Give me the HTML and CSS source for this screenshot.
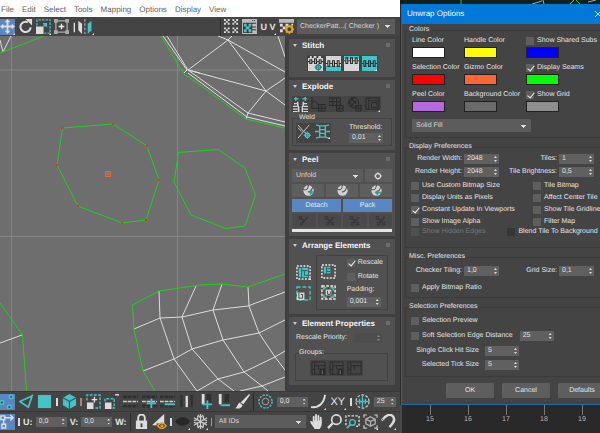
FILE: index.html
```
<!DOCTYPE html>
<html lang="en">
<head>
<meta charset="utf-8">
<title>Edit UVWs</title>
<link rel="stylesheet" href="styles.css">
</head>
<body>
<svg class="defs" aria-hidden="true">
  <symbol id="move" viewBox="0 0 16 16"><path fill="#ddd" d="M8 0l3 3.500H9V7h3.500V5L16 8l-3.500 3V9H9v3.500h2L8 16l-3-3.500h2V9H3.500v2L0 8l3.500-3v2H7V3.500H5z"/></symbol>
  <symbol id="rotate" viewBox="0 0 16 16"><path fill="none" stroke="#ddd" stroke-width="2.200" d="M10.500 3.500A5.500 5.500 0 1 0 13.500 9"/><path fill="#ddd" d="M8 0h7v7z"/></symbol>
  <symbol id="scale" viewBox="0 0 16 16"><path fill="none" stroke="#45c4c4" stroke-width="1.400" stroke-dasharray="2.500 1.300" d="M1 7V1h14v14H9"/><path fill="#ddd" d="M0 8h8v8H0z"/><path fill="none" stroke="#45c4c4" stroke-width="1.500" d="M7.500 5H11v3.500M11 5L8 8"/></symbol>
  <symbol id="freeform" viewBox="0 0 16 16"><path fill="none" stroke="#aaa" stroke-width="1.400" d="M2 2h12v12H2z"/><path fill="#aaa" d="M0 0h4v4H0zM12 0h4v4h-4zM0 12h4v4H0zM12 12h4v4h-4z"/><path stroke="#eee" stroke-width="1.400" d="M8 5v6M5 8h6"/></symbol>
  <symbol id="mirror" viewBox="0 0 22 16"><path fill="#ddd" d="M1 4h1.500v10H1zM6 2l4 3v11l-4-4z"/><path fill="#45c4c4" d="M20 2l-4 3v11l4-4z"/><path stroke="#aaa" stroke-width="1.200" stroke-dasharray="3 1.500" d="M13 0v16"/></symbol>
  <symbol id="checker" viewBox="0 0 16 16"><path fill="none" stroke="#ddd" stroke-width="2" stroke-dasharray="2 2" d="M0 1h7M2 3h4M0 5h7M9 1h7M11 3h4M9 5h7M0 10h7M2 12h4M0 14h7M9 10h7M11 12h4M9 14h7"/></symbol>
  <symbol id="options" viewBox="0 0 16 16"><path fill="#bbb" d="M0 0h16v16H0z"/><path fill="#383838" d="M1 4h14v11H1zM11 1h1v1h-1zM13 1h1v1h-1z"/><path fill="#45c4c4" d="M2 5h3v3H2zM7 5h3v3H7zM4 8h4v3H4zM2 11h3v3H2zM7 11h3v3H7z"/><path fill="#bbb" d="M11 5h4v3h-4zM11 9h4v2h-4zM11 12h4v3h-4z"/></symbol>
  <symbol id="checkgear" viewBox="0 0 16 16"><path fill="#bbb" d="M0 0h16v4H0z"/><path fill="#ddd" d="M1 5h3v3H1zM7 5h3v3H7zM4 8h3v3H4zM1 11h3v3H1zM13 5h2v2h-2z"/><circle cx="11" cy="11" r="3.200" fill="none" stroke="#eaa21b" stroke-width="2.200"/><path stroke="#eaa21b" stroke-width="1.300" d="M11 6v2M11 14v2M6 11h2M14 11h2M7.500 7.500l1.500 1.500M13 13l1.500 1.500M14.500 7.500L13 9M9 13l-1.500 1.500"/></symbol>

  <symbol id="chain-a" viewBox="0 0 16 16"><path fill="#d5d5d5" d="M0 0h16v16H0z"/><path fill="#353535" d="M0 0h2v2H0zM4 0h2v2H4zM9 0h2v2H9zM14 0h2v2h-2z"/><path fill="none" stroke="#333" stroke-width="1.200" d="M2 4h2v4H2zM7 3h2v5H7zM12 4h2v4h-2zM0 6h2M4 6h3M9 6h3M14 6h2"/><circle cx="11" cy="12" r="2.500" fill="none" stroke="#1c8082" stroke-width="1.500"/><path stroke="#1c8082" d="M11 8v8M7 12h8"/></symbol>
  <symbol id="chain-b" viewBox="0 0 16 16"><path fill="#d5d5d5" d="M0 0h16v11H0z"/><path fill="#45c4c4" d="M0 11h16v5H0z"/><path fill="none" stroke="#333" stroke-width="1.200" d="M2 5h2v6H2zM7 5h2v6H7zM12 5h2v6h-2zM0 8h2M4 8h3M9 8h3M14 8h2"/></symbol>
  <symbol id="chain-c" viewBox="0 0 16 16"><path fill="#d5d5d5" d="M0 0h16v16H0z"/><path fill="#45c4c4" d="M0 0h16v3H0z"/><path fill="none" stroke="#333" stroke-width="1.200" d="M2 2h2v6H2zM7 2h2v6H7zM12 2h2v6h-2zM0 5h2M4 5h3M9 5h3M14 5h2"/></symbol>
  <symbol id="chain-d" viewBox="0 0 16 16"><path fill="#45c4c4" d="M0 0h16v16H0z"/><path fill="none" stroke="#234" stroke-width="1.200" d="M2 5h2v6H2zM7 5h2v6H7zM12 5h2v6h-2zM0 8h2M4 8h3M9 8h3M14 8h2"/></symbol>
  <symbol id="break" viewBox="0 0 16 16"><path fill="none" stroke="#45c4c4" stroke-width="1.500" d="M1 2h5M3 0v4M10 2h5M13 0v4"/><path fill="none" stroke="#d5d5d5" stroke-width="1.600" d="M5 5v3l1 3v5M11 5v3l-1 3v5"/><path fill="none" stroke="#d5d5d5" stroke-width="1.400" d="M1 7h4M0 10h5M0 13h5M0 15.500h5M11 7h4M11 10h5M11 13h5M11 15.500h5"/></symbol>
  <symbol id="ex-b" viewBox="0 0 16 16"><path fill="none" stroke="#292929" d="M1 0v12h6M1 6c4-3 6 0 6 3M8 8h7v7H8zM11 8v7M8 12h7"/></symbol>
  <symbol id="ex-c" viewBox="0 0 16 16"><path fill="none" stroke="#292929" d="M0 1h12v8H0zM0 5h12M4 1v8M8 1v8M8 9h7v6H8zM11 9v6M8 12h7"/></symbol>
  <symbol id="ex-d" viewBox="0 0 16 16"><circle cx="7" cy="6" r="5.500" fill="none" stroke="#292929"/><path fill="#292929" d="M4 1h3v3H4zM7 4h3v3H7zM2 4h2v3H2zM4 7h3v3H4z"/><path fill="none" stroke="#292929" d="M9 9h6v6H9zM12 9v6M9 12h6"/></symbol>
  <symbol id="ex-e" viewBox="0 0 16 16"><path fill="none" stroke="#292929" d="M1 1h14v12H1zM4 1v12M4 4h11M7 6h6v5H7z"/></symbol>
  <symbol id="weld-a" viewBox="0 0 16 16"><path fill="none" stroke="#ccc" d="M1 1l6 7 6-7M1 15l6-7M7 8l3 2M1 4l4 4"/><circle cx="11" cy="12" r="2.300" fill="none" stroke="#45c4c4" stroke-width="1.400"/><path stroke="#45c4c4" d="M11 8v8M7 12h8"/></symbol>
  <symbol id="weld-b" viewBox="0 0 16 16"><path fill="none" stroke="#45c4c4" stroke-width="1.500" d="M1 1l4 1h6l4-1M1 15l4-1h6l4 1M5 2v12M11 2v12M5 6h6M5 10h6M0 8h4M12 8h4"/></symbol>

  <symbol id="ring" viewBox="0 0 16 16"><circle cx="8" cy="8" r="5" fill="none" stroke="#ddd" stroke-width="2.500"/><path stroke="#ddd" stroke-width="1.500" d="M8 0v3M8 13v3M0 8h3M13 8h3"/></symbol>
  <symbol id="peel" viewBox="0 0 16 16"><circle cx="8" cy="8" r="7.500" fill="#d2d2d2"/><path fill="none" stroke="#505050" stroke-width="1.500" d="M0 6c5 2 7 1 8-6M7 10c4 0 6-3 7-7"/></symbol>
  <symbol id="peel-quick" viewBox="0 0 16 16"><use href="#peel"/><path fill="#2f9c9c" d="M11 6l4 4-4 5-2-4z"/></symbol>
  <symbol id="peel-reset" viewBox="0 0 16 16"><use href="#peel"/><path fill="none" stroke="#2f9c9c" stroke-width="2.500" d="M7 11h8M10 8l-3 3 3 3"/></symbol>
  <symbol id="snip" viewBox="0 0 16 16"><circle cx="3.500" cy="4" r="2" fill="none" stroke="#373737" stroke-width="1.500"/><circle cx="5" cy="13" r="2" fill="none" stroke="#373737" stroke-width="1.500"/><path stroke="#373737" stroke-width="2.200" d="M5 5l4 4 5-6M9 8l-3 4" fill="none"/></symbol>
  <symbol id="snip-x" viewBox="0 0 16 16"><use href="#snip"/><path stroke="#373737" stroke-width="2" d="M10 10l5 5M15 10l-5 5"/></symbol>

  <symbol id="pack-a" viewBox="0 0 16 16"><path fill="none" stroke="#eee" stroke-width="1.500" stroke-dasharray="2 1.500" d="M1 1h14v14H1z"/><path fill="#45c4c4" d="M3 3h10v10H3z"/><path fill="none" stroke="#256264" d="M6 3v10M6 6h7M9 6v5h4"/></symbol>
  <symbol id="pack-b" viewBox="0 0 16 16"><path fill="none" stroke="#eee" stroke-width="1.500" stroke-dasharray="2 1.500" d="M1 1h14v14H1z"/><path fill="#45c4c4" d="M3 3h7v7H3z"/><path fill="none" stroke="#256264" d="M6 3v7M6 5h4M6 8h4"/></symbol>
  <symbol id="pack-c" viewBox="0 0 16 16"><path fill="none" stroke="#45c4c4" stroke-width="1.500" stroke-dasharray="4 2" d="M1 1h14v14H1z"/><path fill="#d8d8d8" d="M1 7h8v8H1z"/><path fill="none" stroke="#444" d="M3 7v6h4V9H5"/></symbol>
  <symbol id="pack-d" viewBox="0 0 16 16"><path fill="none" stroke="#eee" stroke-width="1.500" stroke-dasharray="3 1.500" d="M1 1h14v14H1z"/><path fill="none" stroke="#45c4c4" stroke-width="1.500" d="M3 5V3h3M10 3h3v3M3 10v3h3M13 10v3h-3"/><path fill="#d8d8d8" d="M5 5h6v6H5z"/><path fill="none" stroke="#444" d="M7 6v4h3V7"/></symbol>
  <symbol id="group" viewBox="0 0 16 16"><path fill="none" stroke="#2b2b2b" d="M1 1h14v13H1zM4 1v13M4 5h11M1 9h3M8 5v4"/></symbol>
  <symbol id="group-add" viewBox="0 0 16 16"><use href="#group"/><path fill="#2b2b2b" d="M9 8h6v7H9z"/><path stroke="#777" d="M12 10v4"/></symbol>

  <symbol id="verts" viewBox="0 0 16 16"><g fill="#245e78" stroke="#45c4c4" stroke-width="1.500"><circle cx="12" cy="3" r="2"/><circle cx="2" cy="9" r="2"/><circle cx="10" cy="14" r="2"/></g></symbol>
  <symbol id="edge" viewBox="0 0 16 16"><path fill="none" stroke="#45c4c4" stroke-width="1.800" d="M1 8l13-6-4 12z"/></symbol>
  <symbol id="face" viewBox="0 0 16 16"><path fill="#45c4c4" d="M1 1h14v14H1z"/></symbol>
  <symbol id="cube" viewBox="0 0 16 16"><path fill="#45c4c4" d="M8 0l7 4v8l-7 4-7-4V4z"/><path fill="none" stroke="#295f62" stroke-width="1.300" d="M1 4l7 4 7-4M8 8v8"/></symbol>
  <symbol id="grow" viewBox="0 0 16 16"><path fill="none" stroke="#45c4c4" stroke-width="1.500" stroke-dasharray="3 1.500" d="M1 7V1h14v14H9"/><path fill="#ddd" d="M1 9h7v7H1z"/><path stroke="#ddd" stroke-width="1.500" d="M9 3v6M6 6h6"/></symbol>
  <symbol id="shrink" viewBox="0 0 16 16"><path fill="none" stroke="#45c4c4" stroke-width="1.500" stroke-dasharray="3 1.500" d="M1 8V5h10v10H9"/><path fill="#ddd" d="M1 9h7v7H1zM12 0h4v1.500h-4z"/></symbol>
  <symbol id="loop" viewBox="0 0 16 16"><path stroke="#303030" stroke-width="3" stroke-dasharray="4 1" d="M0 3h16M0 13h16"/><path stroke="#ccc" stroke-width="1.700" stroke-dasharray="4 1" d="M0 8h16"/></symbol>
  <symbol id="loop-add" viewBox="0 0 16 16"><use href="#loop"/><path stroke="#45c4c4" stroke-width="2" d="M10 5v10M5 10h10"/></symbol>
  <symbol id="loop-sub" viewBox="0 0 16 16"><use href="#loop"/><path stroke="#45c4c4" stroke-width="2" d="M5 11h11"/></symbol>
  <symbol id="ring-sel" viewBox="0 0 16 16"><path fill="#333" d="M1 1h3v13H1zM12 1h3v13h-3z"/><path fill="#ddd" d="M7 2h2.500v12H7z"/></symbol>
  <symbol id="ring-add" viewBox="0 0 16 16"><path fill="#303030" d="M9 0h5v9H9z"/><path fill="#ddd" d="M4 0h3v11H4z"/><path stroke="#45c4c4" stroke-width="2" d="M10 7v9M5 11h10"/></symbol>
  <symbol id="ring-sub" viewBox="0 0 16 16"><path fill="#303030" d="M9 0h5v9H9z"/><path fill="#ddd" d="M3 0h3v11H3z"/><path stroke="#45c4c4" stroke-width="2" d="M5 12h10"/></symbol>
  <symbol id="brush" viewBox="0 0 16 16"><path fill="#ddd" d="M15 0l1 1-7 10-3-2zM5 9l3 3c-1 4-5 4-8 3 3-1 2-4 5-6z"/></symbol>
  <symbol id="falloff" viewBox="0 0 16 16"><circle cx="8" cy="8" r="7" fill="none" stroke="#45c4c4" stroke-width="1.500" stroke-dasharray="2.400 1.300"/><circle cx="8" cy="8" r="3.500" fill="none" stroke="#aaa"/></symbol>
  <symbol id="curve" viewBox="0 0 16 16"><path fill="none" stroke="#ddd" stroke-width="2" d="M0 14C9 15 14 9 15 1"/></symbol>
  <symbol id="pixel" viewBox="0 0 16 16"><circle cx="8" cy="8" r="7" fill="none" stroke="#ccc" stroke-width="1.300" stroke-dasharray="3 1.500"/><path fill="none" stroke="#45c4c4" stroke-width="1.400" d="M1 8h14M8 2v12M5 5v6M11 5v6"/></symbol>
  <symbol id="gizmo" viewBox="0 0 16 16"><path fill="none" stroke="#ddd" stroke-width="1.500" d="M1 2h4v4H1zM2 11h4v4H2zM5 4h9M4 6v5M11 1l3 3-3 3"/></symbol>
  <symbol id="lock" viewBox="0 0 16 16"><path fill="#ddd" d="M2 7h12v9H2z"/><path fill="none" stroke="#ddd" stroke-width="2" d="M4.500 8V4a3.500 3.500 0 0 1 7 0v4"/><path fill="#444" d="M7 10h2v4H7z"/></symbol>
  <symbol id="filter" viewBox="0 0 16 16"><path fill="#ddd" d="M0 12L13 0v12z"/><path fill="#444" d="M5 10h11v6H5z"/><path fill="none" stroke="#eaa21b" stroke-width="1.500" d="M6 12.500c3-4 6-4 9 0-3 4-6 4-9 0z"/><circle cx="10.500" cy="12.500" r="1.600" fill="#eaa21b"/></symbol>
  <symbol id="eye" viewBox="0 0 16 16"><path fill="#282828" d="M0 8c4-6 12-6 16 0-4 6-12 6-16 0z"/></symbol>
  <symbol id="snow" viewBox="0 0 16 16"><path fill="none" stroke="#ccc" stroke-width="1.300" d="M8 0v16M1 4l14 8M15 4L1 12M5 1l3 3 3-3M5 15l3-3 3 3M1 7l4-1V2M15 9l-4 1v4M15 7l-4-1V2M1 9l4 1v4"/></symbol>
  <symbol id="hand" viewBox="0 0 16 16"><path fill="none" stroke="#ddd" stroke-width="2" stroke-linecap="round" d="M5 8V3M7.500 8V1M10 8V2M12.500 9V4"/><path fill="#ddd" d="M4 7h9.500v5l-2 4H6L2 10l-1-2 2-.5 2 2z"/></symbol>
  <symbol id="zoom" viewBox="0 0 16 16"><circle cx="10" cy="6" r="5" fill="none" stroke="#ddd" stroke-width="1.800"/><path stroke="#ddd" stroke-width="2.500" d="M6 10l-5 5"/></symbol>
  <symbol id="zoomreg" viewBox="0 0 16 16"><path fill="none" stroke="#ddd" stroke-width="1.500" stroke-dasharray="2.500 1.500" d="M1 12V2h14v11h-3"/><circle cx="8" cy="9" r="3" fill="none" stroke="#45c4c4" stroke-width="1.500"/><path stroke="#45c4c4" stroke-width="1.800" d="M6 11l-4 4"/></symbol>
  <symbol id="extents" viewBox="0 0 16 16"><path fill="none" stroke="#ccc" stroke-width="1.200" d="M1 4V1h3M12 1h3v3M1 12v3h3M12 15h3v-3"/><path fill="none" stroke="#aaa" stroke-width="1.500" d="M8 3l5 2.500v5L8 13l-5-2.500v-5zM3 5.500L8 8l5-2.500M8 8v5"/></symbol>
  <symbol id="snap" viewBox="0 0 16 16"><path fill="none" stroke="#ddd" stroke-width="2.500" d="M1 7c4-6 9-8 12-4s-1 8-4 11"/><path stroke="#444" d="M1 5l3 3"/></symbol>
</svg>

<main class="workspace">
  <section class="editor">
    <nav class="menubar">
      <a href="#">File</a><a href="#">Edit</a><a href="#">Select</a><a href="#">Tools</a><a href="#">Mapping</a><a href="#">Options</a><a href="#">Display</a><a href="#">View</a>
    </nav>

    <div class="toolbar top">
      <button class="tool on fly" aria-label="Move"><svg><use href="#move"/></svg></button>
      <button class="tool" aria-label="Rotate"><svg><use href="#rotate"/></svg></button>
      <button class="tool fly" aria-label="Scale"><svg><use href="#scale"/></svg></button>
      <button class="tool" aria-label="Freeform"><svg><use href="#freeform"/></svg></button>
      <button class="tool wide fly" aria-label="Mirror"><svg><use href="#mirror"/></svg></button>
      <span class="push divider"></span>
      <button class="tool" aria-label="Checker"><svg><use href="#checker"/></svg></button>
      <button class="tool" aria-label="Show map"><svg><use href="#options"/></svg></button>
      <button class="tool text fly" aria-label="UV">U V</button>
      <button class="tool" aria-label="Map options"><svg><use href="#checkgear"/></svg></button>
      <select class="map" aria-label="Map"><option>CheckerPatt...( Checker )</option></select>
    </div>

    <div class="middle">
      <svg class="canvas" viewBox="0 36 285 355" preserveAspectRatio="xMinYMin slice" role="img" aria-label="UV canvas">
        <path class="grid" d="M11.500 36V391M177.500 36V391M0 70H285M0 236.500H285"/>
        <path class="wire" d="M0 40L3 52 11 36M163 36L187 70M167 36L188 70L228 40L218 36M228 40L232 36M228 40L266 91L285 105M228 40L285 72M188 70L266 91L285 78M266 91L248 113M188 70L248 113L285 122M187 70L184 73M188 73L200 82L247 117L285 126M248 113L246 119M278 36L285 57M188 70L200 73"/>
        <path class="wire" d="M159 291L160 318L174 359L197 391M134 329L160 318L182 317L213 310L248 306L285 292M196 286L182 317L192 349L200 358L218 379L234 391M143 371L174 359L192 349L223 340L259 333L285 320M222 284L213 310L223 340L244 372L262 386L268 391M248 287L249 306L259 333L275 357L285 370M197 391L218 379L244 372L275 357L285 351M240 391L262 386L285 377M0 343L22 335"/>
        <path class="seam" d="M0 53L44 36M161 36L184 74L200 85L246 119L285 128M155 391L143 371L134 329L132.500 305L159 291L200 285L222 284L248 287L285 274M0 303L22.500 335L26.500 391"/>
        <path class="seam" d="M62.500 128L113 124L147 146L159 180L146 220L122 223L78 206L57 165zM178.500 152.500L218 149.500L245 168L255.500 195L245 226L226 228.500L191 215L174 182z"/>
        <path class="picked" d="M61.500 127h2v2h-2zM112 123h2v2h-2zM146 145h2v2h-2zM158 179h2v2h-2zM145 219h2v2h-2zM121 222h2v2h-2zM77 205h2v2h-2zM56 164h2v2h-2z"/>
        <path class="pivot" d="M105.500 171.500h5v5h-5zM105.500 174h5M108 171.500v5"/>
      </svg>

      <aside class="panel">
        <section class="rollup">
          <h2>Stitch</h2>
          <div class="strip center">
            <button class="tool" aria-label="Stitch custom"><svg><use href="#chain-a"/></svg></button>
            <button class="tool" aria-label="Stitch to target"><svg><use href="#chain-b"/></svg></button>
            <button class="tool" aria-label="Stitch to source"><svg><use href="#chain-c"/></svg></button>
            <button class="tool fly" aria-label="Stitch average"><svg><use href="#chain-d"/></svg></button>
          </div>
        </section>

        <section class="rollup">
          <h2>Explode</h2>
          <div class="strip">
            <button class="tool" aria-label="Break"><svg><use href="#break"/></svg></button>
            <button class="tool" disabled aria-label="Flatten by angle"><svg><use href="#ex-b"/></svg></button>
            <button class="tool" disabled aria-label="Flatten by smoothing"><svg><use href="#ex-c"/></svg></button>
            <button class="tool" disabled aria-label="Flatten by material"><svg><use href="#ex-d"/></svg></button>
            <button class="tool fly" disabled aria-label="Flatten custom"><svg><use href="#ex-e"/></svg></button>
          </div>
          <fieldset class="box weld">
            <legend>Weld</legend>
            <div class="strip">
              <button class="tool" aria-label="Target weld"><svg><use href="#weld-a"/></svg></button>
              <button class="tool fly" aria-label="Weld selected"><svg><use href="#weld-b"/></svg></button>
            </div>
            <div class="stack">
              <label for="thr">Threshold:</label>
              <span class="spin"><input id="thr" value="0,01"></span>
            </div>
          </fieldset>
        </section>

        <section class="rollup">
          <h2>Peel</h2>
          <div class="peel">
            <div class="row"><select class="mode" aria-label="Peel mode"><option>Unfold</option></select><button class="key narrow" aria-label="Peel options"><svg><use href="#ring"/></svg></button></div>
            <div class="row">
              <button class="key" aria-label="Quick peel"><svg><use href="#peel-quick"/></svg></button>
              <button class="key" aria-label="Peel mode"><svg><use href="#peel"/></svg></button>
              <button class="key" aria-label="Reset peel"><svg><use href="#peel-reset"/></svg></button>
            </div>
            <div class="row">
              <button class="key on">Detach</button>
              <button class="key on">Pack</button>
            </div>
            <div class="row">
              <button class="key" disabled aria-label="Edit seams"><svg><use href="#snip"/></svg></button>
              <button class="key" disabled aria-label="Point to point"><svg><use href="#snip-x"/></svg></button>
              <button class="key" disabled aria-label="Convert edge"><svg><use href="#snip-x"/></svg></button>
              <button class="key" disabled aria-label="Expand seams"><svg><use href="#snip-x"/></svg></button>
            </div>
            <div class="meter"></div>
          </div>
        </section>

        <section class="rollup">
          <h2>Arrange Elements</h2>
          <div class="arrange">
            <div class="icons">
              <button class="tool fly" aria-label="Pack custom"><svg><use href="#pack-a"/></svg></button>
              <button class="tool" aria-label="Rescale elements"><svg><use href="#pack-c"/></svg></button>
            </div>
            <div class="box inner">
              <div class="icons">
                <button class="tool" aria-label="Pack together"><svg><use href="#pack-b"/></svg></button>
                <button class="tool" aria-label="Pack normalize"><svg><use href="#pack-d"/></svg></button>
              </div>
              <div class="stack">
                <label class="check"><input type="checkbox" checked>Rescale</label>
                <label class="check"><input type="checkbox">Rotate</label>
                <label for="pad">Padding:</label>
                <span class="spin"><input id="pad" value="0,001"></span>
              </div>
            </div>
          </div>
        </section>

        <section class="rollup">
          <h2>Element Properties</h2>
          <div class="priority"><label for="prio">Rescale Priority:</label><span class="spin off"><input id="prio" disabled></span></div>
          <fieldset class="box groups">
            <legend>Groups:</legend>
            <div class="strip">
              <button class="tool" disabled aria-label="Group"><svg><use href="#group-add"/></svg></button>
              <button class="tool" disabled aria-label="Ungroup"><svg><use href="#group-add"/></svg></button>
              <button class="tool" disabled aria-label="Select group"><svg><use href="#group"/></svg></button>
            </div>
          </fieldset>
        </section>
      </aside>
    </div>

    <div class="toolbar low">
      <button class="tool on" aria-label="Vertex"><svg><use href="#verts"/></svg></button>
      <button class="tool" aria-label="Edge"><svg><use href="#edge"/></svg></button>
      <button class="tool" aria-label="Polygon"><svg><use href="#face"/></svg></button>
      <span class="bar"></span>
      <button class="tool" aria-label="Element"><svg><use href="#cube"/></svg></button>
      <span class="bar warm"></span>
      <button class="tool" aria-label="Grow"><svg><use href="#grow"/></svg></button>
      <button class="tool" aria-label="Shrink"><svg><use href="#shrink"/></svg></button>
      <button class="tool" aria-label="Loop"><svg><use href="#loop"/></svg></button>
      <button class="tool" aria-label="Loop grow"><svg><use href="#loop-add"/></svg></button>
      <button class="tool" aria-label="Loop shrink"><svg><use href="#loop-sub"/></svg></button>
      <button class="tool" aria-label="Ring"><svg><use href="#ring-sel"/></svg></button>
      <button class="tool" aria-label="Ring grow"><svg><use href="#ring-add"/></svg></button>
      <button class="tool" aria-label="Ring shrink"><svg><use href="#ring-sub"/></svg></button>
      <button class="tool" aria-label="Paint select"><svg><use href="#brush"/></svg></button>
      <span class="divider"></span>
      <button class="tool" aria-label="Soft selection"><svg><use href="#falloff"/></svg></button>
      <span class="spin"><input value="0,0" aria-label="Falloff"></span>
      <button class="tool fly" aria-label="Falloff curve"><svg><use href="#curve"/></svg></button>
      <button class="tool text big fly" aria-label="XY">XY</button>
      <span class="bar"></span>
      <button class="tool" aria-label="Edge distance"><svg><use href="#pixel"/></svg></button>
      <span class="spin short"><input value="25" aria-label="Distance"></span>
    </div>

    <div class="toolbar low status">
      <button class="tool on" aria-label="Absolute"><svg><use href="#gizmo"/></svg></button>
      <span class="bar"></span>
      <label class="axis" for="u">U:</label><span class="spin"><input id="u" value="0,0"></span>
      <label class="axis" for="v">V:</label><span class="spin"><input id="v" value="0,0"></span>
      <span class="axis">W:</span>
      <span class="divider"></span>
      <button class="tool" aria-label="Lock"><svg><use href="#lock"/></svg></button>
      <button class="tool" aria-label="Filter"><svg><use href="#filter"/></svg></button>
      <span class="bar"></span>
      <button class="tool fly" aria-label="Hide"><svg><use href="#eye"/></svg></button>
      <button class="tool fly" aria-label="Freeze"><svg><use href="#snow"/></svg></button>
      <span class="bar thin"></span>
      <select class="ids" aria-label="Material IDs"><option>All IDs</option></select>
      <button class="tool" aria-label="Pan"><svg><use href="#hand"/></svg></button>
      <button class="tool" aria-label="Zoom"><svg><use href="#zoom"/></svg></button>
      <button class="tool" aria-label="Zoom region"><svg><use href="#zoomreg"/></svg></button>
      <button class="tool fly" aria-label="Zoom extents"><svg><use href="#extents"/></svg></button>
      <button class="tool fly" aria-label="Snap"><svg><use href="#snap"/></svg></button>
    </div>
  </section>

  <section class="side">
    <svg class="sliver" viewBox="0 0 200 4" preserveAspectRatio="xMinYMin slice" aria-hidden="true"><path stroke="#2ecc2e" d="M61 0v4M176 0l4 4"/><path stroke="#aaa" d="M132 4l10-3M143 0l1 4M170 4l4-4M188 2l8-2"/></svg>

    <div class="dialog" role="dialog" aria-labelledby="dlg-title">
      <header><h1 id="dlg-title">Unwrap Options</h1><button aria-label="Close"><svg viewBox="0 0 8 8"><path stroke="#fff" d="M0 0l8 8M8 0L0 8"/></svg></button></header>
      <form>
        <fieldset class="colors">
          <legend>Colors</legend>
          <div class="swatches">
            <label>Line Color<input type="button" class="swatch white" aria-label="Line Color"></label>
            <label>Handle Color<input type="button" class="swatch yellow" aria-label="Handle Color"></label>
            <div><label class="check"><input type="checkbox">Show Shared Subs</label><button type="button" class="swatch blue" aria-label="Shared color"></button></div>
            <label>Selection Color<input type="button" class="swatch red" aria-label="Selection Color"></label>
            <label>Gizmo Color<input type="button" class="swatch orange" aria-label="Gizmo Color"></label>
            <div><label class="check"><input type="checkbox" checked>Display Seams</label><button type="button" class="swatch green" aria-label="Seam color"></button></div>
            <label>Peel Color<input type="button" class="swatch purple" aria-label="Peel Color"></label>
            <label>Background Color<input type="button" class="swatch gray" aria-label="Background Color"></label>
            <div><label class="check"><input type="checkbox" checked>Show Grid</label><button type="button" class="swatch silver" aria-label="Grid color"></button></div>
          </div>
          <select class="fill" aria-label="Fill"><option>Solid Fill</option></select>
        </fieldset>

        <fieldset class="display">
          <legend>Display Preferences</legend>
          <div class="fields">
            <label for="rw">Render Width:</label><span class="spin"><input id="rw" value="2048"></span>
            <label for="ti">Tiles:</label><span class="spin"><input id="ti" value="1"></span>
            <label for="rh">Render Height:</label><span class="spin"><input id="rh" value="2048"></span>
            <label for="tb">Tile Brightness:</label><span class="spin"><input id="tb" value="0,5"></span>
          </div>
          <div class="checks">
            <label class="check"><input type="checkbox">Use Custom Bitmap Size</label>
            <label class="check"><input type="checkbox">Tile Bitmap</label>
            <label class="check"><input type="checkbox">Display Units as Pixels</label>
            <label class="check"><input type="checkbox">Affect Center Tile</label>
            <label class="check"><input type="checkbox" checked>Constant Update In Viewports</label>
            <label class="check"><input type="checkbox">Show Tile Gridlines</label>
            <label class="check"><input type="checkbox">Show Image Alpha</label>
            <label class="check"><input type="checkbox">Filter Map</label>
          </div>
          <div class="lastrow">
            <label class="check off"><input type="checkbox" disabled>Show Hidden Edges</label>
            <label class="check"><input type="checkbox" class="dark">Blend Tile To Background</label>
          </div>
        </fieldset>

        <fieldset class="misc">
          <legend>Misc. Preferences</legend>
          <div class="fields">
            <label for="ct">Checker Tiling:</label><span class="spin"><input id="ct" value="1,0"></span>
            <label for="gs">Grid Size:</label><span class="spin"><input id="gs" value="0,1"></span>
          </div>
          <label class="check"><input type="checkbox">Apply Bitmap Ratio</label>
        </fieldset>

        <fieldset class="selection">
          <legend>Selection Preferences</legend>
          <label class="check"><input type="checkbox">Selection Preview</label>
          <div class="pair"><label class="check"><input type="checkbox">Soft Selection Edge Distance</label><span class="spin"><input value="25" aria-label="Soft Selection Edge Distance"></span></div>
          <div class="sizes">
            <label for="hs">Single Click Hit Size</label><span class="spin"><input id="hs" value="5"></span>
            <label for="ts">Selected Tick Size</label><span class="spin"><input id="ts" value="5"></span>
          </div>
        </fieldset>

        <div class="actions"><button type="button">OK</button><button type="button">Cancel</button><button type="button">Defaults</button></div>
      </form>
    </div>

    <div class="timeline"><span>15</span><span>16</span><span>17</span><span>18</span><span>19</span></div>
  </section>
</main>
</body>
</html>
```
FILE: styles.css
```
* { box-sizing: border-box; }

body {
  margin: 0;
  background: #2b2b2b;
  color: #e4e4e4;
  font: 7px/10px "Liberation Sans", Arial, sans-serif;
  text-rendering: geometricPrecision;
}

.defs { position: absolute; width: 0; height: 0; }

button, input, select { margin: 0; padding: 0; border: 0; border-radius: 0; font: inherit; color: inherit; background: none; text-rendering: inherit; }
fieldset { margin: 0; padding: 0; min-width: 0; border: 0; }
legend { padding: 0; }
h1, h2 { margin: 0; font-size: inherit; }
label { white-space: nowrap; }

.workspace { display: grid; grid-template-columns: 2fr 1fr; min-height: 100vh; }
.editor { display: flex; flex-direction: column; min-width: 0; background: #444; padding-bottom: 2px; }

/* menu */
.menubar { display: flex; gap: 8px; height: 17px; padding: 5px 1px 0; background: #fff; font-size: 8px; }
.menubar a { color: #606060; text-decoration: none; }

/* tool buttons */
.tool { position: relative; flex: none; width: 15px; height: 16px; display: grid; place-items: center; }
.tool svg { display: block; width: 15px; height: 15px; }
.tool.on { background: #5a87c4; }
.tool.wide, .tool.wide svg { width: 22px; }
.tool.text { width: 16px; font-weight: 700; font-size: 9px; white-space: nowrap; }
.tool.big { font-weight: 400; font-size: 11px; }
.fly::after { content: ""; position: absolute; right: 0; bottom: 0; border: 1px solid #eee; border-top-color: transparent; border-left-color: transparent; }

.toolbar { display: flex; align-items: center; gap: 3px; height: 19px; padding-right: 5px; background: #444; }
.push { margin-left: auto; }
.divider { width: 1px; height: 18px; background: #2c2c2c; }
.bar { width: 2px; height: 8px; background: #ddd; }
.bar.warm { background: #a88a6a; }
.bar.thin { width: 1px; background: #999; }
.low { height: 20px; padding-right: 4px; border-top: 1px solid #383838; justify-content: space-between; }
.low .spin { width: 31px; }
.low .spin.short { width: 22px; }
.axis { font-weight: 700; font-size: 9px; }

select {
  appearance: none;
  height: 13px;
  padding: 0 12px 0 4px;
  color: #d8d8d8;
  background:
    linear-gradient(#ddd, #ddd) right 5px top 6px / 5px 1px no-repeat,
    linear-gradient(#ddd, #ddd) right 6px top 7px / 3px 1px no-repeat,
    linear-gradient(#ddd, #ddd) right 7px top 8px / 1px 1px no-repeat,
    #5c5c5c;
}
select.map { width: 98px; height: 15px; padding-left: 3px; }
select.ids { width: 91px; }

.spin { position: relative; display: flex; width: 34px; height: 10px; background: #606060; color: #e0e0e0; }
.spin input { width: 100%; padding: 0 8px 0 3px; }
.spin::before, .spin::after { content: ""; position: absolute; right: 2px; width: 3px; height: 2px; background: #ddd; clip-path: polygon(50% 0, 100% 100%, 0 100%); }
.spin::before { top: 2px; }
.spin::after { bottom: 2px; clip-path: polygon(0 0, 100% 0, 50% 100%); }
.spin.off { background: #4d4d4d; }
.spin.off::before, .spin.off::after { background: #888; }

.check { display: flex; align-items: center; gap: 3px; }
.check input { appearance: none; flex: none; position: relative; width: 8px; height: 8px; background: #5f5f5f; }
.check input.dark { background: #363636; }
.check input:checked::before { content: ""; position: absolute; left: 3px; top: 0; width: 3px; height: 6px; border: solid #f0f0f0; border-width: 0 1px 1px 0; transform: rotate(40deg); }
.check.off { color: #777; }
.check.off input { background: #505050; }

/* canvas and rollups */
.middle { flex: 1; display: flex; min-height: 0; }
.canvas { flex: 1; min-width: 0; height: 355px; background: #6e6e6e; }
.canvas path { fill: none; }
.canvas .grid { stroke: #868686; }
.canvas .wire { stroke: #dedede; }
.canvas .seam { stroke: #1fd01f; }
.canvas .picked { fill: #d8380c; }
.canvas .pivot { stroke: #e06a40; }

.panel { flex: none; width: 115px; display: flex; flex-direction: column; gap: 3px; padding: 3px 5px 3px 3px; border-left: 1px solid #3a3a3a; background: #404040; }
.rollup { background: #515151; padding: 0 3px 4px; }
.rollup h2 { position: relative; height: 16px; padding: 1px 0 0 10px; font-size: 8px; line-height: 12px; color: #f4f4f4; }
.rollup h2::before { content: ""; position: absolute; left: 1px; top: 5px; border: 2px solid transparent; border-top: 3px solid #ccc; border-bottom: 0; }
.rollup h2::after { content: ""; position: absolute; right: 2px; top: 4px; width: 4px; height: 4px; background: #6a6a6a; }
.strip { display: flex; width: max-content; gap: 3px; padding: 0 1px; background: #444; }
.strip.center { margin: 0 auto 2px; }
.strip + .box { margin-top: 2px; }
.box { border: 1px solid #424242; }
.box legend { margin-left: 3px; line-height: 8px; }
.weld { display: flex; justify-content: space-between; padding: 1px 8px 2px 3px; }
.stack { display: grid; justify-items: start; }

.peel { display: grid; gap: 2px; }
.row { display: flex; gap: 2px; }
.row select { flex: 2; min-width: 0; height: 13px; }
.key { flex: 1; height: 13px; display: grid; place-items: center; background: #5e5e5e; }
.key svg { width: 11px; height: 11px; }
.key.narrow svg { width: 8px; height: 8px; }
.key.on { background: #5a87c4; color: #e8e8e8; }
.key:disabled { background: #4a4a4a; }
.meter { height: 3px; background: #e4e4e4; }

.arrange { display: flex; gap: 5px; padding: 0 4px 0 4px; }
.icons { display: grid; gap: 5px; align-content: center; }
.inner { flex: 1; display: flex; justify-content: space-between; padding: 1px 4px 2px; }
.inner .stack { gap: 2px; }
.inner .check { height: 12px; }
.priority { display: flex; justify-content: space-between; padding: 0 10px 6px 4px; }
.priority .spin { width: 27px; }
.groups { margin: 0 4px 0 3px; padding: 3px 0 4px; }
.groups .strip { margin-left: 14px; }

/* options dialog */
.side { display: flex; flex-direction: column; min-width: 0; overflow: hidden; background: #2b2b2b; }
.sliver { display: block; width: 100%; height: 4px; background: #10201c; }
.dialog { margin-left: 1px; width: 212px; border: 1px solid #1c6aa8; border-width: 0 0 1px 1px; background: #444; }
.dialog header { display: flex; justify-content: space-between; align-items: center; height: 20px; padding: 0 12px 0 5px; background: #0078d7; color: #fff; }
.dialog header button { display: flex; }
.dialog header svg { width: 6px; height: 6px; }
.dialog h1 { font-weight: 400; font-size: 8px; }
.dialog form { display: grid; gap: 4px; padding: 1px 0 6px 3px; }
.dialog fieldset { border: 1px solid #3b3b3b; }
.dialog legend { margin-left: 2px; padding: 0 1px; }

.swatches { display: grid; grid-template-columns: 52px 62px 1fr; row-gap: 5px; padding: 1px 0 0 6px; }
.swatches > * { display: grid; align-content: start; grid-template-rows: 11px 11px; height: 22px; }
.swatches .check { height: 10px; }
.swatch { width: 33px; height: 11px; border: 1px solid #222; }
.white { background: #fff; }
.yellow { background: #ff0; }
.blue { background: #00f; }
.red { background: #f00; }
.orange { background: #ff6633; }
.green { background: #0f0; }
.purple { background: #b469dc; }
.gray { background: #6a6a6a; }
.silver { background: #8e8e8e; }
.fill { display: block; width: 119px; margin: 7px 0 5px 6px; }

.fields { display: grid; grid-template-columns: 56px 36px 55px 36px; row-gap: 3px; column-gap: 2px; align-items: center; }
.fields label { text-align: right; }
.fields .spin { width: 35px; }
.display .fields { padding-top: 2px; }
.checks { display: grid; grid-template-columns: 122px 1fr; row-gap: 2px; padding: 4px 0 0 5px; }
.lastrow { display: flex; gap: 22px; padding: 0 0 10px 5px; }
.misc .fields { padding-top: 4px; }
.misc > .check { padding: 7px 0 4px 5px; }
.selection > .check { padding: 4px 0 0 5px; }
.pair { display: flex; gap: 7px; padding: 5px 0 5px 5px; }
.sizes { display: grid; grid-template-columns: 73px 35px; gap: 4px 6px; padding-bottom: 6px; }
.sizes label { text-align: right; }
.actions { display: flex; gap: 8px; padding: 2px 0 0 41px; }
.actions button { width: 48px; height: 15px; background: #5e5e5e; border-radius: 1px; }

.timeline { flex: 1; display: grid; grid-template-columns: repeat(5, 38px); padding-left: 9px; border-left: 2px solid #484848; background: #292929; color: #b5b5b5; }
.timeline span { display: grid; justify-items: center; align-content: start; }
.timeline span::before { content: ""; width: 1px; height: 10px; background: #777; }
```
